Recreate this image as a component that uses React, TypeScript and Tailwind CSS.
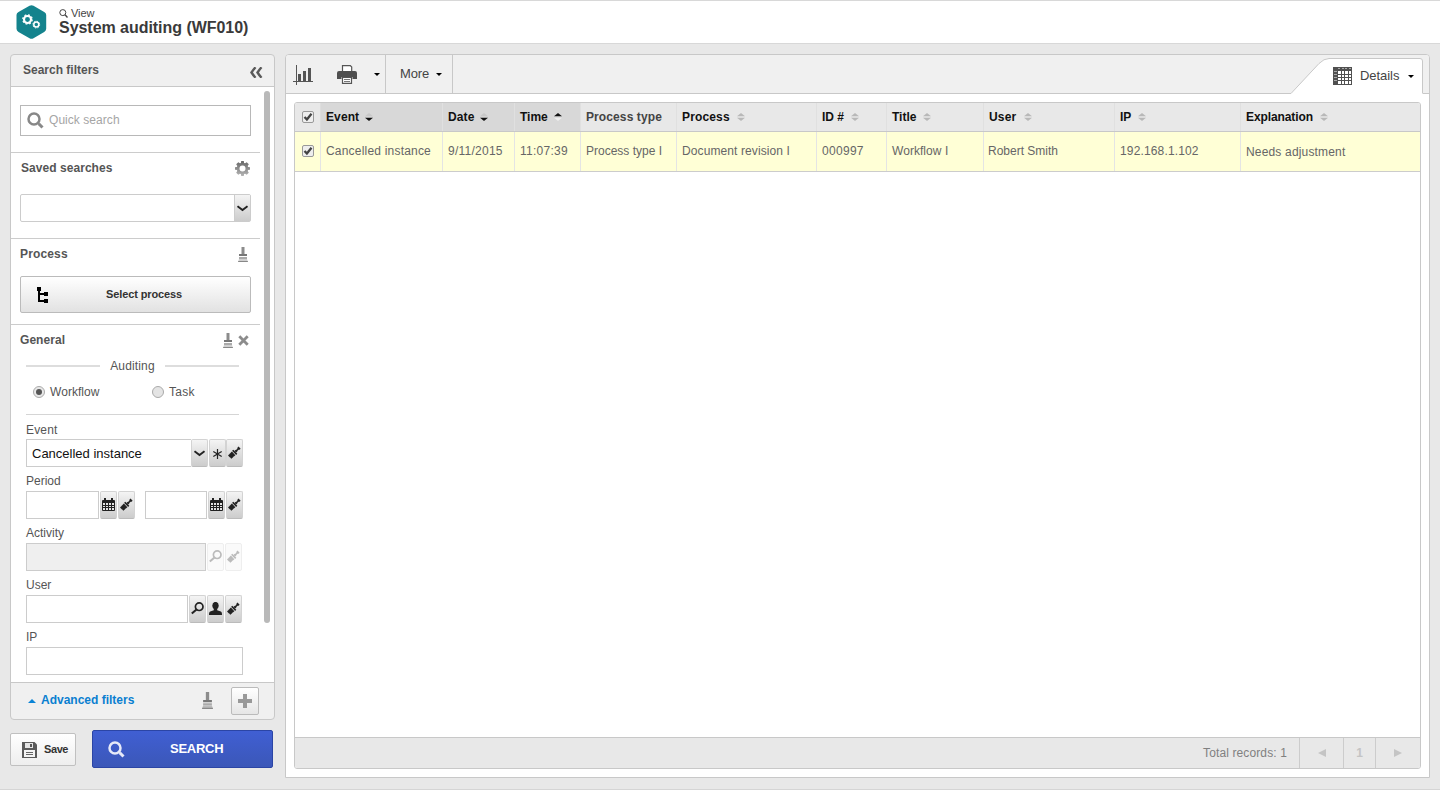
import type { ReactNode } from 'react';
import clsx from 'clsx';

type SortState = 'none' | 'idle' | 'asc' | 'desc';

interface Column {
  label: string;
  value: string;
  sort: SortState;
  className: string;
  valueClass?: string;
}

const GRID = 'grid grid-cols-[26px_122px_72px_66px_96px_140px_70px_97px_131px_126px_179px]';

const COLUMNS: Column[] = [
  { label: 'Event', value: 'Cancelled instance', sort: 'desc', className: 'gap-[6px] bg-[#d8d8d8] text-[#111] tracking-[0.1px]', valueClass: 'tracking-[0.2px]' },
  { label: 'Date', value: '9/11/2015', sort: 'desc', className: 'gap-[6px] bg-[#d8d8d8] text-[#111] tracking-[0.1px]', valueClass: 'tracking-[0.25px]' },
  { label: 'Time', value: '11:07:39', sort: 'asc', className: 'gap-[6px] bg-[#d8d8d8] text-[#111]', valueClass: 'tracking-[0.25px]' },
  { label: 'Process type', value: 'Process type I', sort: 'none', className: 'gap-[7px] text-[#444] tracking-[0.1px]' },
  { label: 'Process', value: 'Document revision I', sort: 'idle', className: 'gap-[7px] text-[#111] tracking-[0.15px]', valueClass: 'tracking-[0.1px]' },
  { label: 'ID #', value: '000997', sort: 'idle', className: 'gap-[7px] text-[#111]', valueClass: 'tracking-[0.3px]' },
  { label: 'Title', value: 'Workflow I', sort: 'idle', className: 'gap-[7px] text-[#111]', valueClass: 'tracking-[0.05px]' },
  { label: 'User', value: 'Robert Smith', sort: 'idle', className: 'gap-2 text-[#111] tracking-[0.2px]', valueClass: '-ml-px' },
  { label: 'IP', value: '192.168.1.102', sort: 'idle', className: 'gap-[7px] text-[#111]', valueClass: 'tracking-[0.15px]' },
  { label: 'Explanation', value: 'Needs adjustment', sort: 'idle', className: 'gap-[7px] text-[#111] tracking-[-0.1px]', valueClass: 'pt-[2px] tracking-[0.17px]' },
];

function Lens({ size, color, className }: { size: number; color: string; className?: string }) {
  return (
    <svg width={size} height={size} viewBox="0 0 17 17" fill="none" className={className}>
      <circle cx="7" cy="7" r="5.5" stroke={color} strokeWidth="2.500" />
      <path d="M11.300 11.300l1.400 1.400" stroke={color} strokeWidth="2" />
      <path d="M12 12l3.500 3.500" stroke={color} strokeWidth="3" />
    </svg>
  );
}

function Broom({ wide = false }: { wide?: boolean }) {
  return (
    <svg width={wide ? 11 : 10} height={wide ? 17 : 15} viewBox="0 0 10 15" preserveAspectRatio="none">
      <path d="M3.500 0h3v7h-3z" fill="#8c8c8c" />
      <path d="M1 7h8v2H1z" fill="#777" />
      <path d="M1 10h8v2H1z" fill="#aaa" />
      <path d="M1 12h8l1 3H0z" fill={wide ? '#bbb' : '#d0d0d0'} />
      <path d="M.3 14h9.400l.3 1H0z" fill="#888" />
    </svg>
  );
}

function Brush() {
  return (
    <svg width="13" height="13" viewBox="0 0 14 14" fill="currentColor">
      <g transform="translate(7 7) rotate(-44)">
        <path d="M-7.300-2.400l1-.3.500.5.600-.6 1 .3.700-.2h2.200v5.400h-2.200l-.7-.3-1 .4-.6-.6-.5.500-1-.4.4-1.200-.4-1z" />
        <path d="M-.6-3.100h1.800v6.200H-.6z" />
        <path d="M1.200-1.200l1.400-.1 1 .5 1.600-.1.900-.7h1.500v3.200H6.100l-.9-.6-1.600-.1-1 .5-1.400-.1z" />
      </g>
    </svg>
  );
}

function CalendarIcon() {
  return (
    <svg width="13" height="13" viewBox="0 0 13 13">
      <path d="M1 2h11q1 0 1 1v9q0 1-1 1H1q-1 0-1-1V3q0-1 1-1z" fill="currentColor" />
      <path d="M2 0h2v3H2zM9 0h2v3H9z" fill="currentColor" />
      <path d="M1 5h2v2H1zM4 5h2v2H4zM7 5h2v2H7zM10 5h2v2h-2zM1 8h2v1H1zM4 8h2v1H4zM7 8h2v1H7zM10 8h2v1h-2zM1 10h2v2H1zM4 10h2v2H4zM7 10h2v2H7zM10 10h2v2h-2z" fill="#e4e4e4" />
    </svg>
  );
}

function FieldLens() {
  return (
    <svg width="13" height="13" viewBox="0 0 13 13" fill="none" stroke="currentColor">
      <circle cx="8.200" cy="4.700" r="3.800" strokeWidth="1.700" />
      <path d="M5.500 7.400L.8 11.600" strokeWidth="2" />
    </svg>
  );
}

function PersonIcon() {
  return (
    <svg width="13" height="13" viewBox="0 0 13 13" fill="currentColor">
      <ellipse cx="6.500" cy="3.600" rx="3.200" ry="3.700" />
      <path d="M4.800 6h3.400v2.200l3.600 1.300c1 .5 1.200 1.700 1.200 3.500H0c0-1.800.2-3 1.200-3.500l3.600-1.300z" />
    </svg>
  );
}

function Asterisk() {
  return (
    <svg width="9" height="10" viewBox="0 0 9 10" stroke="currentColor" strokeWidth="1.200">
      <path d="M4.500 0v10M.3 2.600l8.400 4.800M8.700 2.600L.3 7.400" />
    </svg>
  );
}

function ChevronDown() {
  return (
    <svg width="11" height="7" viewBox="0 0 11 7" fill="none" className="shrink-0">
      <path d="M.5 1.200l5 3.800 5-3.800" stroke="#222" strokeWidth="1.900" />
    </svg>
  );
}

function GearIcon() {
  return (
    <svg width="15" height="15" viewBox="0 0 15 15">
      <defs>
        <linearGradient id="gear" x1="0" y1="0" x2="0" y2="1">
          <stop offset="0" stopColor="#666" />
          <stop offset="1" stopColor="#b5b5b5" />
        </linearGradient>
      </defs>
      <path
        fill="url(#gear)"
        fillRule="evenodd"
        d="M6.200 0h2.600l.3 1.900 1 .4L11.700 1.200l2.100 2.100-1.100 1.600.4 1 1.900.3v2.600l-1.900.3-.4 1 1.100 1.600-2.100 2.100-1.600-1.100-1 .4-.3 1.900H6.200l-.3-1.900-1-.4-1.600 1.100-2.100-2.100 1.100-1.600-.4-1L0 8.800V6.200l1.900-.3.4-1-1.100-1.600 2.100-2.100 1.600 1.100 1-.4zM7.500 4.500a3 3 0 1 0 0 6 3 3 0 0 0 0-6z"
      />
    </svg>
  );
}

function LogoIcon() {
  return (
    <svg width="32" height="34" viewBox="0 0 32 34" className="mt-[4px] ml-[15px]">
      <path d="M14.500.7q2-1 4 0l10.700 6.200q2 1.100 2 3.200v13.600q0 2.100-2 3.200l-10.700 6.300q-2 1-4 0l-11-6.300q-2-1.100-2-3.200V10.100q0-2.100 2-3.200z" fill="#14838d" />
      <g fill="none" stroke="#fff">
        <circle cx="12.500" cy="14.500" r="3.500" strokeWidth="2.100" />
        <circle cx="12.500" cy="14.500" r="4.700" strokeWidth="1.300" strokeDasharray="1.850 1.841" />
        <circle cx="21.300" cy="19.600" r="2.500" strokeWidth="1.500" />
        <circle cx="21.300" cy="19.600" r="3.400" strokeWidth="1" strokeDasharray="1.300 1.370" />
      </g>
    </svg>
  );
}

function Caret({ className }: { className?: string }) {
  return <span className={clsx('h-0 w-0 border-x-[3px] border-t-[3px] border-x-transparent border-t-black', className)} />;
}

function SortIcon({ sort }: { sort: SortState }) {
  if (sort === 'none') return null;
  const up = sort === 'asc' ? '#111' : sort === 'desc' ? '#c8c8c8' : '#b8b8b8';
  const down = sort === 'desc' ? '#111' : sort === 'asc' ? '#eee' : '#b8b8b8';
  return (
    <svg width="8" height="8" viewBox="0 0 8 8">
      <path d="M0 3.300L4 0l4 3.300z" fill={up} />
      <path d="M0 4.700L4 8l4-3.300z" fill={down} />
    </svg>
  );
}

function CheckBox() {
  return (
    <svg width="12" height="12" viewBox="0 0 12 12" className="shrink-0">
      <rect x=".5" y=".5" width="11" height="11" rx="1.500" fill="#eee" stroke="#999" />
      <path d="M2.500 6l2.400 2.500 4.600-5.700" fill="none" stroke="#444" strokeWidth="2.300" />
    </svg>
  );
}

function FieldButton({ children, disabled = false }: { children: ReactNode; disabled?: boolean }) {
  return (
    <button
      className={clsx(
        'flex h-7 w-[17px] shrink-0 items-center justify-center rounded-[2px] border',
        disabled
          ? 'border-[#eee] bg-[#fafafa] text-[#bbb]'
          : 'border-[#d3d3d3] border-b-[#bbb] bg-linear-to-b from-[#f4f4f4] to-[#ccc] text-[#222]',
      )}
    >
      <span className="mb-px flex shrink-0">{children}</span>
    </button>
  );
}

function Field({ className, disabled = false, children }: { className: string; disabled?: boolean; children?: ReactNode }) {
  return (
    <div className={clsx('flex h-7 shrink-0 items-center border border-[#ccc]', disabled ? 'bg-[#efefef]' : 'bg-white', className)}>
      {children}
    </div>
  );
}

function FieldLabel({ children }: { children: ReactNode }) {
  return <div className="h-6 pt-1 leading-5">{children}</div>;
}

function Header() {
  return (
    <header className="flex h-11 border-y border-[#d8d8d8] bg-white">
      <LogoIcon />
      <div className="ml-3 text-[#444]">
        <div className="mt-[6px] flex h-3 items-center gap-[3px] text-[11px] leading-3">
          <svg width="9" height="9" viewBox="0 0 9 9" fill="none" stroke="#444">
            <circle cx="3.800" cy="3.600" r="3" />
            <path d="M6 5.800l2.500 2.700" strokeWidth="1.400" />
          </svg>
          <span className="tracking-[-0.1px]">View</span>
        </div>
        <h1 className="text-base leading-[18px] font-bold tracking-[-0.04px] text-[#3a3a3a]">System auditing (WF010)</h1>
      </div>
    </header>
  );
}

function Filters() {
  return (
    <div className="flex h-[595px] justify-between overflow-hidden bg-white">
      <div className="w-[249px] text-[#555]">
        <div className="h-[66px] border-b border-[#ccc] pt-[18px] pl-[9px]">
          <div className="flex h-[31px] w-[231px] items-center border border-[#b8b8b8] pl-[6px] text-[#a5a5a5]">
            <Lens size={17} color="#888" />
            <span className="mb-[2px] ml-[5px] leading-4 tracking-[0.05px]">Quick search</span>
          </div>
        </div>

        <div className="h-[86px] border-b border-[#ccc] pl-[9px]">
          <div className="flex h-[41px] w-[230px] items-start justify-between pt-[7px] pl-px font-bold">
            <span className="leading-4 tracking-[0.05px]">Saved searches</span>
            <span className="mt-px">
              <GearIcon />
            </span>
          </div>
          <div className="flex h-7 w-[231px] rounded-[2px] border border-[#ccc]">
            <div className="flex-1" />
            <div className="flex w-4 items-center justify-center border-l border-[#ccc] bg-linear-to-b from-[#f4f4f4] to-[#ccc] pt-px">
              <ChevronDown />
            </div>
          </div>
        </div>

        <div className="h-[86px] border-b border-[#ccc] pl-[9px]">
          <div className="flex h-[37px] w-[228px] items-start justify-between pt-[7px] font-bold">
            <span className="leading-4 tracking-[0.15px]">Process</span>
            <span className="mt-px">
              <Broom />
            </span>
          </div>
          <button className="flex h-[37px] w-[231px] items-center rounded-[2px] border border-[#bbb] bg-linear-to-b from-white to-[#e2e2e2] text-[11px] font-bold text-[#333]">
            <svg width="12" height="16" viewBox="0 0 12 16" className="ml-4" fill="#000">
              <path d="M0 0h4v4H0zM1 4h2v11H1zM2 6h6v2H2zM2 13h6v2H2zM7 5h4v4H7zM7 12h4v4H7z" />
            </svg>
            <span className="ml-[57px] tracking-[-0.12px]">Select process</span>
          </button>
        </div>

        <div className="pl-[15px]">
          <div className="-ml-[6px] flex h-[31px] w-[229px] justify-between pt-[7px] font-bold">
            <span className="leading-4 tracking-[0.05px]">General</span>
            <span className="mt-px flex gap-[5px]">
              <Broom />
              <svg width="11" height="11" viewBox="0 0 11 11" className="mt-[2px]">
                <path d="M1.300 1.300l8.400 8.400M9.700 1.300L1.300 9.700" stroke="#8c8c8c" strokeWidth="2.800" />
              </svg>
            </span>
          </div>
          <div className="flex h-5 w-[213px] items-center justify-between leading-4">
            <span className="h-[2px] w-[74px] bg-[#ddd]" />
            <span className="tracking-[0.15px]">Auditing</span>
            <span className="h-[2px] w-[74px] bg-[#ddd]" />
          </div>
          <div className="flex h-[39px] w-[213px] items-center border-b border-[#d5d5d5] pb-[6px] pl-[7px]">
            <span className="flex h-3 w-3 items-center justify-center rounded-full border border-[#aaa] bg-[#e8e8e8]">
              <span className="h-[6px] w-[6px] rounded-full bg-[#555]" />
            </span>
            <span className="ml-[5px] w-[102px] tracking-[0.05px]">Workflow</span>
            <span className="h-3 w-3 rounded-full border border-[#aaa] bg-[#e4e4e4]" />
            <span className="ml-[5px] tracking-[0.3px]">Task</span>
          </div>
          <div className="h-6 pt-[5px] leading-5 tracking-[0.15px]">Event</div>
          <div className="flex h-7">
            <Field className="w-[165px] border-r-0 pt-px pl-[5px] text-[13px] text-[#111]">Cancelled instance</Field>
            <FieldButton>
              <span className="mt-[2px]">
                <ChevronDown />
              </span>
            </FieldButton>
            <span className="w-px" />
            <FieldButton>
              <span className="mt-[2px]">
                <Asterisk />
              </span>
            </FieldButton>
            <FieldButton><Brush /></FieldButton>
          </div>

          <FieldLabel>Period</FieldLabel>
          <div className="flex gap-px">
            <Field className="w-[73px]" />
            <FieldButton><CalendarIcon /></FieldButton>
            <FieldButton><Brush /></FieldButton>
            <Field className="ml-[9px] w-[62px]" />
            <FieldButton><CalendarIcon /></FieldButton>
            <FieldButton><Brush /></FieldButton>
          </div>

          <FieldLabel>Activity</FieldLabel>
          <div className="flex gap-px">
            <Field className="w-[180px]" disabled />
            <FieldButton disabled><FieldLens /></FieldButton>
            <FieldButton disabled><Brush /></FieldButton>
          </div>

          <FieldLabel>User</FieldLabel>
          <div className="flex gap-px">
            <Field className="w-[162px]" />
            <FieldButton><FieldLens /></FieldButton>
            <FieldButton><PersonIcon /></FieldButton>
            <FieldButton><Brush /></FieldButton>
          </div>

          <FieldLabel>IP</FieldLabel>
          <Field className="w-[217px]" />
        </div>
      </div>
      <div className="mt-1 mr-1 h-[532px] w-[6px] rounded-full bg-[#b9b9b9]" />
    </div>
  );
}

function Sidebar() {
  return (
    <aside className="w-[265px] shrink-0">
      <div className="h-[666px] overflow-hidden rounded border border-[#c8c8c8] bg-[#f0f0f0]">
        <div className="flex h-8 items-center justify-between border-b border-[#c8c8c8] pr-[11px] pl-3">
          <span className="mb-[2px] font-bold text-[#555]">Search filters</span>
          <svg width="13" height="11" viewBox="0 0 13 11" className="mt-[3px]" fill="none" stroke="#5a5a5a" strokeWidth="2.400">
            <path d="M5.500.3Q3.500 2.500 1.500 5.500 3.500 8.500 5.500 10.700M11.500.3Q9.500 2.500 7.500 5.500 9.500 8.500 11.500 10.700" />
          </svg>
        </div>
        <Filters />
        <div className="flex h-[37px] items-center border-t border-[#c8c8c8] pl-[17px]">
          <span className="h-0 w-0 border-x-4 border-b-4 border-x-transparent border-b-[#0a84d6]" />
          <span className="mb-[2px] ml-[5px] w-[161px] font-bold text-[#0a7fd0]">Advanced filters</span>
          <span className="-mt-px">
            <Broom wide />
          </span>
          <button className="ml-[18px] flex h-7 w-7 items-center justify-center rounded-[2px] border border-[#bbb] bg-linear-to-b from-white to-[#e6e6e6]">
            <svg width="14" height="14" viewBox="0 0 14 14">
              <path d="M5 0h4v5h5v4H9v5H5V9H0V5h5z" fill="#999" />
            </svg>
          </button>
        </div>
      </div>
      <div className="mt-[10px] flex items-center">
        <button className="flex h-[33px] w-[66px] items-center rounded-[2px] border border-[#c0c0c0] bg-linear-to-b from-white to-[#eee] pl-[11px] text-[11px] font-bold text-[#333]">
          <svg width="15" height="16" viewBox="0 0 15 16" className="mt-px shrink-0">
            <path d="M0 0h12.500L15 2.500V16H0z" fill="#5a5a5a" />
            <path d="M3 1h8v5H3z" fill="#e4e4e4" />
            <path d="M8 2h2v3H8z" fill="#555" />
            <path d="M2 8h11v7H2z" fill="#f4f4f4" />
            <path d="M4 10h7v1H4zM4 12h7v1H4z" fill="#666" />
          </svg>
          <span className="ml-[7px] tracking-[-0.4px]">Save</span>
        </button>
        <button className="ml-4 flex h-[38px] w-[181px] items-center rounded-[2px] border border-[#2b45a5] bg-linear-to-b from-[#405fd3] to-[#3b57b8] pl-[15px] text-white">
          <Lens size={17} color="#e6e9f8" className="mt-px" />
          <span className="ml-[45px] text-[13px] font-bold tracking-[-0.25px]">SEARCH</span>
        </button>
      </div>
    </aside>
  );
}

function Toolbar() {
  return (
    <div className="flex h-[39px] bg-[#f0f0f0] text-[#444]">
      <div className="flex flex-1 items-center border-b border-[#c8c8c8]">
        <div className="flex h-full w-[100px] items-center border-r border-[#c8c8c8] pl-[7px]">
          <svg width="20" height="20" viewBox="0 0 20 20" fill="#555" className="mt-[2px]">
            <path d="M3 0h1v20H3zM0 16h20v1H0zM5 9h3v7H5zM10 6h3v10h-3zM15 3h3v13h-3z" />
          </svg>
          <svg width="20" height="19" viewBox="0 0 20 19" className="ml-6">
            <path d="M5.500 6V.6h7.800l1.400 1.400v4" fill="#fff" stroke="#555" strokeWidth="1.200" />
            <path d="M2 6h16q2 0 2 2v6h-4.500v-2h-11v2H0V8q0-2 2-2z" fill="#4f4f4f" />
            <path d="M5.500 12.500h9v5.900h-9z" fill="#fff" stroke="#555" strokeWidth="1.200" />
            <path d="M7 14h6v1H7zM7 16h6v1H7z" fill="#777" />
          </svg>
          <Caret className="ml-[17px]" />
        </div>
        <div className="flex h-full w-[67px] items-center border-r border-[#c8c8c8] pl-[14px]">
          <span className="text-[13px] tracking-[-0.1px]">More</span>
          <Caret className="ml-[7px]" />
        </div>
      </div>
      <div className="relative flex h-full w-[132px] items-center pl-[42px]">
        <svg width="132" height="39" viewBox="0 0 132 39" className="absolute top-0 left-0">
          <path d="M0 38.500L28 8.500Q33 3.500 38 3.500H129Q131.500 3.500 131.500 6V38.500V39H0z" fill="#fff" />
          <path d="M0 38.500L28 8.500Q33 3.500 38 3.500H129Q131.500 3.500 131.500 6V38.500" fill="none" stroke="#c8c8c8" />
        </svg>
        <svg width="19" height="18" viewBox="0 0 19 18" className="relative mt-[3px]">
          <path d="M0 0h19v18H0z" fill="#505050" />
          <path d="M5 4h3v3H5zM9 4h2v3H9zM12 4h3v3h-3zM16 4h2v3h-2zM5 8h3v2H5zM9 8h2v2H9zM12 8h3v2h-3zM16 8h2v2h-2zM5 11h3v2H5zM9 11h2v2H9zM12 11h3v2h-3zM16 11h2v2h-2zM5 14h3v3H5zM9 14h2v3H9zM12 14h3v3h-3zM16 14h2v3h-2z" fill="#fff" />
          <path d="M1 4h3v1H1zM1 7h3v1H1zM1 10h3v1H1zM1 13h3v1H1zM5 1h2v1H5zM9 1h2v1H9zM12 1h2v1h-2zM16 1h2v1h-2z" fill="#aaa" />
        </svg>
        <span className="relative mt-[3px] ml-2 text-[13px] tracking-[-0.05px]">Details</span>
        <Caret className="relative mt-1 ml-[9px]" />
      </div>
      <div className="w-[6px] border-b border-[#c8c8c8]" />
    </div>
  );
}

function AuditTable() {
  return (
    <div className="flex h-[667px] w-[1127px] flex-col overflow-hidden rounded-[3px] border border-[#c8c8c8] bg-white">
      <div className={clsx(GRID, 'h-[29px] border-b border-[#c8c8c8] bg-[#e8e8e8] font-bold')}>
        <div className="flex items-center border-r border-[#ddd] pl-[7px]">
          <CheckBox />
        </div>
        {COLUMNS.map((col) => (
          <div key={col.label} className={clsx('flex items-center border-r border-[#e0e0e0] pl-[5px] last:border-r-0', col.className)}>
            <span>{col.label}</span>
            <SortIcon sort={col.sort} />
          </div>
        ))}
      </div>
      <div className={clsx(GRID, 'h-10 border-b border-[#ccc] bg-[#ffffd6] text-[#666]')}>
        <div className="flex items-center border-r border-[#e4e4e4] pb-px pl-[7px]">
          <CheckBox />
        </div>
        {COLUMNS.map((col) => (
          <div key={col.label} className="flex items-center border-r border-[#e4e4e4] pb-[2px] pl-[5px] whitespace-nowrap last:border-r-0">
            <span className={col.valueClass}>{col.value}</span>
          </div>
        ))}
      </div>
      <div className="flex-1" />
      <div className="flex h-[31px] items-center justify-end border-t border-[#c8c8c8] bg-[#e8e8e8] text-[#808080]">
        <span className="mr-3 tracking-[0.12px]">Total records: 1</span>
        <div className="flex h-full w-11 items-center justify-center border-l border-[#ccc]">
          <span className="h-0 w-0 border-y-4 border-r-8 border-y-transparent border-r-[#c4c4c4]" />
        </div>
        <div className="flex h-full w-8 items-center justify-center border-l border-[#ccc] font-bold text-[#c4c4c4]">1</div>
        <div className="flex h-full w-[45px] items-center justify-center border-l border-[#ccc]">
          <span className="h-0 w-0 border-y-4 border-l-8 border-y-transparent border-l-[#c4c4c4]" />
        </div>
      </div>
    </div>
  );
}

export default function App() {
  return (
    <div className="h-[790px] w-[1440px] overflow-hidden border-b border-[#d5d5d5] bg-[#e8e8e8] font-['Liberation_Sans',Arial,sans-serif] text-xs">
      <Header />
      <div className="flex gap-[10px] px-[10px] pt-[10px]">
        <Sidebar />
        <main className="h-[724px] w-[1145px] overflow-hidden rounded-t border border-[#c8c8c8] bg-white">
          <Toolbar />
          <div className="pt-2 pl-2">
            <AuditTable />
          </div>
        </main>
      </div>
    </div>
  );
}
